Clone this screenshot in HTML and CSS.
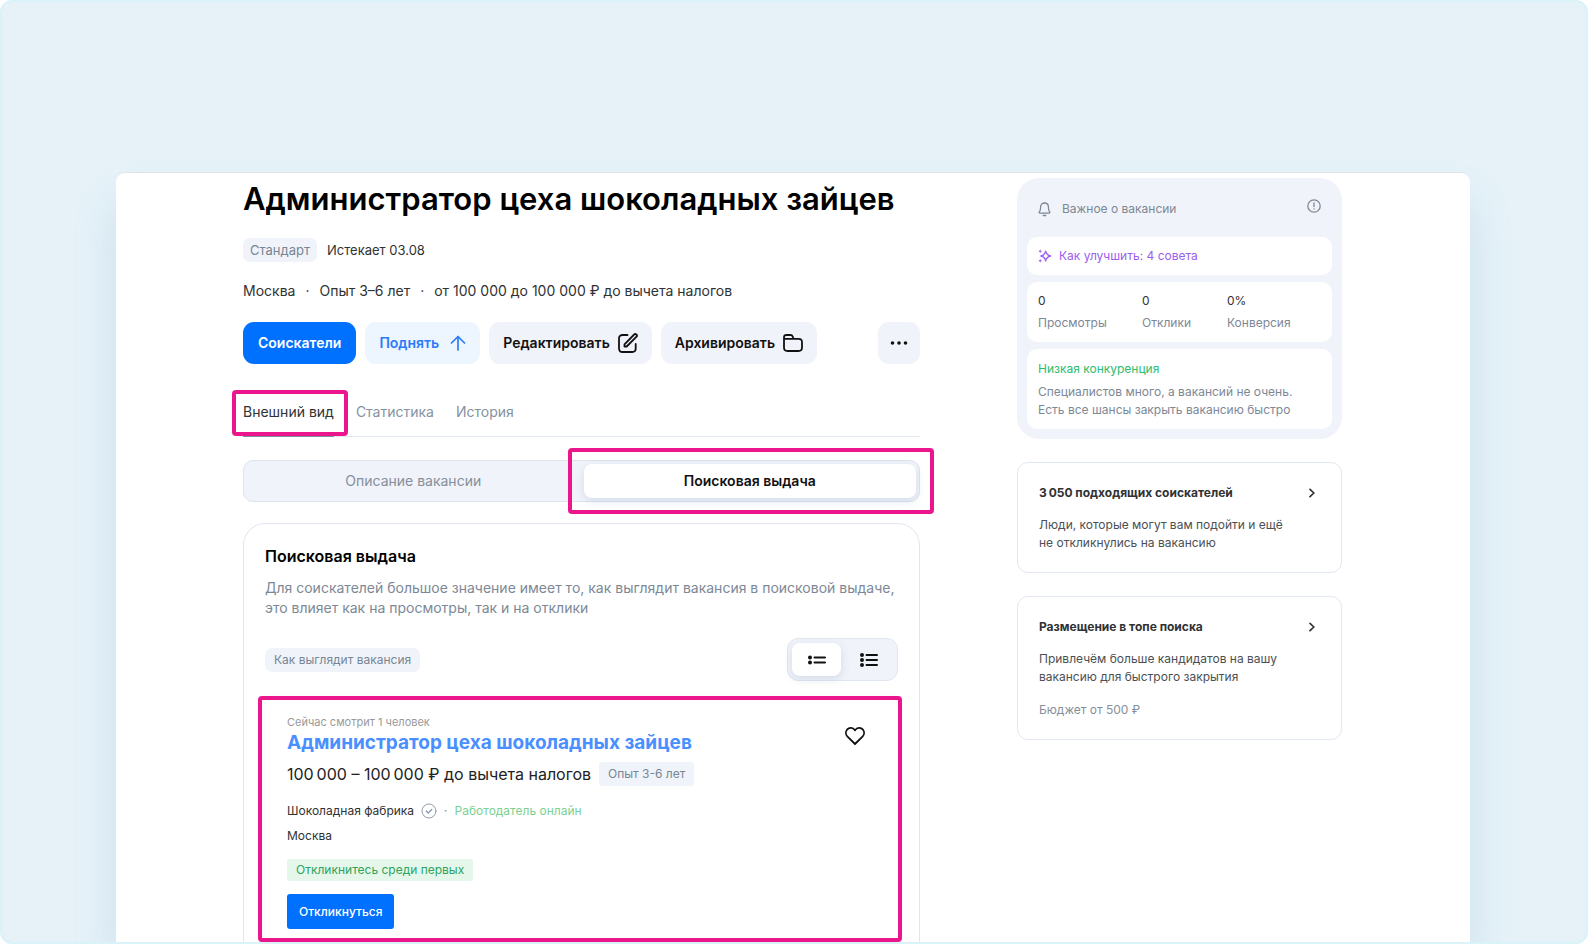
FILE: index.html
```html
<!DOCTYPE html>
<html lang="ru">
<head>
<meta charset="utf-8">
<meta name="viewport" content="width=device-width, initial-scale=1">
<title>Администратор цеха шоколадных зайцев</title>
<link rel="stylesheet" href="styles.css">
</head>
<body>
<div class="frame">
  <div class="panel">
    <main class="main">
      <h1 class="title">Администратор цеха шоколадных зайцев</h1>
      <div class="status">
        <span class="chip">Стандарт</span>
        <span class="expires">Истекает 03.08</span>
      </div>
      <p class="meta"><span>Москва</span><span>·</span><span>Опыт 3–6 лет</span><span>·</span><span>от 100 000 до 100 000 ₽ до вычета налогов</span></p>
      <div class="actions">
        <button class="btn btn-primary" type="button">Соискатели</button>
        <button class="btn btn-light" type="button">Поднять
          <svg width="16" height="16" viewBox="0 0 16 16" fill="none" stroke="currentColor" stroke-width="1.7" stroke-linecap="round" stroke-linejoin="round"><path d="M8 15V1.5M1.5 8 8 1.5 14.500 8"/></svg>
        </button>
        <button class="btn" type="button">Редактировать
          <svg width="20" height="20" viewBox="0 0 20 20" fill="none" stroke="currentColor" stroke-width="1.8" stroke-linecap="round" stroke-linejoin="round"><path d="M9.500 2H4.500C2.500 2 1 3.300 1 5.300v9.900C1 17.600 2.400 19 4.500 19h9.700c2.100 0 3.500-1.400 3.500-3.500V11"/><path d="M6.500 13.500v-2.200L16.200 1.500c.7-.7 1.500-.6 2.200 0 .8.700.8 1.500.1 2.200L8.700 13.500z"/></svg>
        </button>
        <button class="btn" type="button">Архивировать
          <svg width="20" height="18" viewBox="0 0 20 18" fill="none" stroke="currentColor" stroke-width="1.800" stroke-linejoin="round"><path d="M1 4.800V13.500C1 15.800 2.200 17 4.500 17h11c2.300 0 3.500-1.200 3.500-3.500V8.300c0-2.300-1.200-3.500-3.500-3.500zV3.500C1 1.700 1.800 1 3.500 1h4c1.200 0 1.800.5 2.200 1.500l.8 2.300"/></svg>
        </button>
        <button class="btn btn-more" type="button" aria-label="Ещё">
          <svg width="18" height="6" viewBox="0 0 18 6" fill="currentColor"><circle cx="2.500" cy="3" r="1.800"/><circle cx="9" cy="3" r="1.800"/><circle cx="15.500" cy="3" r="1.800"/></svg>
        </button>
      </div>
      <nav class="tabs">
        <a class="tab tab-active" href="#view">Внешний вид<span class="mark mark-tab"></span></a>
        <a class="tab" href="#stats">Статистика</a>
        <a class="tab" href="#history">История</a>
      </nav>
      <div class="segmented">
        <button class="segment" type="button">Описание вакансии</button>
        <button class="segment segment-active" type="button">Поисковая выдача<span class="mark mark-segment"></span></button>
      </div>
      <section class="results">
        <h2 class="results-title">Поисковая выдача</h2>
        <p class="results-text">Для соискателей большое значение имеет то, как выглядит вакансия в поисковой выдаче,<br>это влияет как на просмотры, так и на отклики</p>
        <div class="results-bar">
          <span class="chip">Как выглядит вакансия</span>
          <div class="toggle">
            <button class="toggle-item toggle-active" type="button" aria-label="Компактный вид">
              <svg width="18" height="16" viewBox="0 0 18 16" fill="none" stroke="currentColor" stroke-width="2" stroke-linecap="round"><path d="M6.500 5.500H17M6.500 10.500H17"/><path stroke-width="4" d="M2 5.500h0M2 10.500h0"/></svg>
            </button>
            <button class="toggle-item" type="button" aria-label="Подробный вид">
              <svg width="18" height="16" viewBox="0 0 18 16" fill="none" stroke="currentColor" stroke-width="2" stroke-linecap="round"><path d="M6.500 3H17M6.500 8H17M6.500 13H17"/><path stroke-width="4" d="M2 3h0M2 8h0M2 13h0"/></svg>
            </button>
          </div>
        </div>
        <article class="snippet">
          <div class="snippet-head">
            <div>
              <p class="watching">Сейчас смотрит 1 человек</p>
              <h3 class="snippet-title"><a href="#vacancy">Администратор цеха шоколадных зайцев</a></h3>
            </div>
            <button class="like" type="button" aria-label="В избранное">
              <svg width="20" height="18" viewBox="0 0 20 18" fill="none" stroke="currentColor" stroke-width="1.800" stroke-linejoin="round"><path d="M10 17 2.300 9.300C.6 7.500.5 4.600 2 2.700 4 .4 7.500.4 9.300 2.500L10 3.300l.7-.8C12.500.4 16 .4 18 2.700c1.500 1.900 1.400 4.800-.3 6.600z"/></svg>
            </button>
          </div>
          <div class="salary-row">
            <span class="salary">100&#8201;000 – 100&#8201;000 ₽ до вычета налогов</span>
            <span class="chip chip-square">Опыт 3-6 лет</span>
          </div>
          <div class="company">
            <span>Шоколадная фабрика</span>
            <svg width="16" height="16" viewBox="0 0 16 16" fill="none" stroke="#8f9bab" stroke-linecap="round" stroke-linejoin="round"><circle cx="8" cy="8" r="7"/><path stroke-width="1.400" d="m5.300 8 1.900 1.900 3.500-3.500"/></svg>
            <span class="dot">·</span>
            <span class="online">Работодатель онлайн</span>
          </div>
          <p class="city">Москва</p>
          <span class="first">Откликнитесь среди первых</span>
          <button class="apply" type="button">Откликнуться</button>
          <span class="mark mark-snippet"></span>
        </article>
      </section>
    </main>
    <aside class="side">
      <section class="about">
        <header class="about-head">
          <svg width="13" height="15" viewBox="0 0 13 15" fill="none" stroke="currentColor" stroke-width="1.300" stroke-linecap="round" stroke-linejoin="round"><path d="M6.500 1C4.200 1 2.600 2.700 2.600 4.900c0 3-.4 3.900-1.200 4.900-.5.700-.2 1.400.6 1.400h9c.8 0 1.100-.7.600-1.400-.8-1-1.200-1.900-1.200-4.900C10.400 2.700 8.800 1 6.500 1zM5.300 13.500h2.400"/></svg>
          <h2 class="about-title">Важное о вакансии</h2>
          <button class="info" type="button" aria-label="Подробнее">
            <svg width="14" height="14" viewBox="0 0 14 14" fill="none" stroke="currentColor" stroke-width="1.300" stroke-linecap="round"><circle cx="7" cy="7" r="6.200"/><path d="M7 4v3.500M7 9.800v.2"/></svg>
          </button>
        </header>
        <a class="box tips" href="#tips">
          <svg width="14" height="14" viewBox="0 0 14 14" fill="none" stroke="currentColor" stroke-width="1.400" stroke-linejoin="round"><path d="M7.700 2.200c.5 2.700 1.600 4 4.800 4.800-3.200.8-4.300 2.100-4.800 4.800C7.200 9.100 6.100 7.800 2.900 7c3.200-.8 4.300-2.100 4.800-4.800z"/><path stroke="none" fill="currentColor" d="M2.200 0c.2 1.400.7 1.900 2 2.200-1.300.3-1.800.8-2 2.200C2 3 1.500 2.500.2 2.200 1.500 1.900 2 1.400 2.200 0zM2.200 9.600c.2 1.400.7 1.900 2 2.200-1.300.3-1.800.8-2 2.200-.2-1.400-.7-1.900-2-2.200 1.300-.3 1.800-.8 2-2.200z"/></svg>
          Как улучшить: 4 совета
        </a>
        <dl class="box stats">
          <div class="stat"><dt>Просмотры</dt><dd>0</dd></div>
          <div class="stat"><dt>Отклики</dt><dd>0</dd></div>
          <div class="stat"><dt>Конверсия</dt><dd>0%</dd></div>
        </dl>
        <div class="box level">
          <h3 class="level-title">Низкая конкуренция</h3>
          <p>Специалистов много, а вакансий не очень.<br>Есть все шансы закрыть вакансию быстро</p>
        </div>
      </section>
      <a class="promo" href="#people">
        <span class="promo-head"><strong>3&#8201;050 подходящих соискателей</strong>
          <svg width="6" height="10" viewBox="0 0 6 10" fill="none" stroke="currentColor" stroke-width="1.700" stroke-linecap="round" stroke-linejoin="round"><path d="m1 1.300 3.900 3.700L1 8.700"/></svg></span>
        <span class="promo-text">Люди, которые могут вам подойти и ещё<br>не откликнулись на вакансию</span>
      </a>
      <a class="promo" href="#top">
        <span class="promo-head"><strong>Размещение в топе поиска</strong>
          <svg width="6" height="10" viewBox="0 0 6 10" fill="none" stroke="currentColor" stroke-width="1.700" stroke-linecap="round" stroke-linejoin="round"><path d="m1 1.300 3.900 3.700L1 8.700"/></svg></span>
        <span class="promo-text">Привлечём больше кандидатов на вашу<br>вакансию для быстрого закрытия</span>
        <span class="promo-price">Бюджет от 500 ₽</span>
      </a>
    </aside>
  </div>
</div>
</body>
</html>
```

FILE: styles.css
```css
* { box-sizing: border-box; }
html, body { margin: 0; background: #fff; }
body {
  font-family: Inter, "Liberation Sans", sans-serif;
  font-size: 12px;
  line-height: 18px;
  color: #303233;
}
h1, h2, h3, p, dl, dd { margin: 0; }
a { color: inherit; text-decoration: none; }
button {
  margin: 0;
  padding: 0;
  border: 0;
  background: none;
  color: inherit;
  font: inherit;
  cursor: pointer;
}
svg { display: block; flex: none; }

.frame {
  display: flex;
  height: 100vh;
  padding: 170px 116px 0 114px;
  overflow: hidden;
  border: 2px solid #daf3f8;
  border-radius: 12px;
  background: #e6f2f8;
}
.panel {
  flex: 1;
  display: grid;
  grid-template-columns: minmax(0, 1fr) 325px;
  gap: 97px;
  padding: 5px 128px 0 127px;
  border-top: 1px solid #dfe3e5;
  border-radius: 9px 9px 0 0;
  background: #fff;
  box-shadow: 0 30px 44px rgba(90, 155, 195, 0.2);
}
.main { display: flex; flex-direction: column; min-height: 0; }
.main > * { flex-shrink: 0; }
.title {
  font-size: 31px;
  line-height: 42px;
  font-weight: 600;
  color: #000;
  white-space: nowrap;
}
.status { display: flex; align-items: center; gap: 10px; margin-top: 18px; font-size: 13px; }
.chip {
  padding: 3px 7px;
  border-radius: 7px;
  background: #f0f3f9;
  color: #768694;
  font-size: 13px;
}
.results-bar .chip { padding: 3px 9px; font-size: 12px; }
.salary-row .chip { font-size: 12px; padding: 3px 9px; }
.chip-square { border-radius: 3px; }
.meta {
  display: flex;
  gap: 10px;
  margin-top: 19px;
  font-size: 14px;
  line-height: 20px;
}
.actions { display: flex; gap: 9px; margin-top: 21px; }
.btn {
  display: flex;
  align-items: center;
  gap: 8px;
  height: 42px;
  padding: 0 14px;
  border-radius: 11px;
  background: #f0f3f9;
  color: #111;
  font-size: 14px;
  font-weight: 600;
}
.btn-primary { padding: 0 15px; background: #0070ff; color: #fff; }
.btn-light { gap: 11px; background: #edf5ff; color: #2b7bf9; }
.btn-more { width: 42px; justify-content: center; padding: 0; margin-left: auto; }

.tabs {
  display: flex;
  gap: 22px;
  margin-top: 26px;
  border-bottom: 1px solid #e2e8f1;
  font-size: 14px;
  color: #8592a0;
}
.tab { position: relative; padding: 13px 0 15px; }
.tab-active { color: #303233; box-shadow: 0 1px 0 #7f8da0; }
.mark {
  position: absolute;
  border: 4px solid #ec168c;
  border-radius: 4px;
  pointer-events: none;
}
.mark-tab { inset: 0 -14px 0 -11px; }

.segmented {
  display: grid;
  grid-template-columns: 1fr 1fr;
  gap: 4px;
  height: 42px;
  margin-top: 23px;
  padding: 3px;
  border: 1px solid #dce4ee;
  border-radius: 10px;
  background: #f0f3f9;
  font-size: 14px;
}
.segment { position: relative; color: #858f9c; }
.segment-active {
  border-radius: 8px;
  background: #fff;
  color: #111;
  font-weight: 600;
  box-shadow: 0 3px 10px rgba(100, 130, 170, 0.2);
}
.mark-segment { inset: -16px -18px -16px -16px; }

.results {
  flex-grow: 1;
  margin-top: 21px;
  padding: 21px 21px 0;
  border: 1px solid #e2e6f0;
  border-radius: 22px 22px 0 0;
}
.results-title { font-size: 16px; line-height: 22px; font-weight: 600; color: #000; }
.results-text {
  margin-top: 11px;
  color: #7d8896;
  font-size: 14px;
  line-height: 20px;
  white-space: nowrap;
}
.results-bar {
  display: flex;
  align-items: center;
  justify-content: space-between;
  margin-top: 20px;
}
.toggle {
  display: flex;
  gap: 3px;
  padding: 4px;
  border: 1px solid #e1e7f1;
  border-radius: 11px;
  background: #f0f3f9;
}
.toggle-item {
  display: grid;
  place-items: center;
  width: 49px;
  height: 33px;
  border-radius: 8px;
  color: #111;
}
.toggle-active { background: #fff; box-shadow: 0 3px 10px rgba(100, 130, 170, 0.2); }

.snippet {
  position: relative;
  display: flex;
  flex-direction: column;
  align-items: flex-start;
  margin-top: 19px;
  padding: 15px 33px 15px 22px;
  border-radius: 10px;
  box-shadow: 0 0 12px rgba(100, 130, 170, 0.08);
}
.mark-snippet { inset: -4px -4px 2px -7px; }
.snippet-head { display: flex; align-items: center; justify-content: space-between; width: 100%; }
.watching { font-size: 11px; line-height: 14px; color: #999; }
.snippet-title { font-size: 19px; line-height: 28px; font-weight: 700; color: #4a8fff; }
.like { color: #111; }
.salary-row { display: flex; align-items: center; gap: 8px; margin-top: 5px; }
.salary { font-size: 16px; line-height: 24px; color: #222; }
.company { display: flex; align-items: center; gap: 7px; margin-top: 16px; }
.dot { color: #768694; }
.online { color: #7bd191; }
.city { margin-top: 7px; }
.first {
  margin-top: 14px;
  padding: 2px 9px;
  border-radius: 3px;
  background: #e5f7ea;
  color: #2da35d;
}
.apply {
  height: 35px;
  margin-top: 13px;
  padding: 0 12px;
  border-radius: 3px;
  background: #0070ff;
  color: #fff;
  font-weight: 500;
}

.side { display: flex; flex-direction: column; gap: 23px; }
.about {
  display: flex;
  flex-direction: column;
  gap: 7px;
  padding: 10px;
  border-radius: 22px;
  background: #f0f3f9;
  color: #7d8896;
}
.about-head { display: flex; align-items: center; gap: 11px; height: 42px; padding: 0 11px; }
.about-title { flex: 1; font-size: 12px; font-weight: 400; }
.info { padding-bottom: 6px; }
.box { padding: 10px 11px; border-radius: 10px; background: #fff; }
.tips { display: flex; align-items: center; gap: 7px; color: #9a60ee; }
.stats { display: grid; grid-template-columns: 104px 85px 1fr; }
.stat { display: flex; flex-direction: column-reverse; gap: 4px; }
.stat dd { color: #303233; }
.level { padding-top: 11px; }
.level-title { margin-bottom: 5px; font-size: 12px; font-weight: 400; color: #2dbd6e; }
.promo {
  display: flex;
  flex-direction: column;
  padding: 21px 21px 20px;
  border: 1px solid #e2e8f1;
  border-radius: 11px;
}
.promo-head { display: flex; align-items: center; justify-content: space-between; padding-right: 5px; }
.promo-head strong { font-weight: 700; }
.promo-text { margin-top: 14px; color: #4b5054; }
.promo-price { margin-top: 15px; color: #858f9c; }
```
